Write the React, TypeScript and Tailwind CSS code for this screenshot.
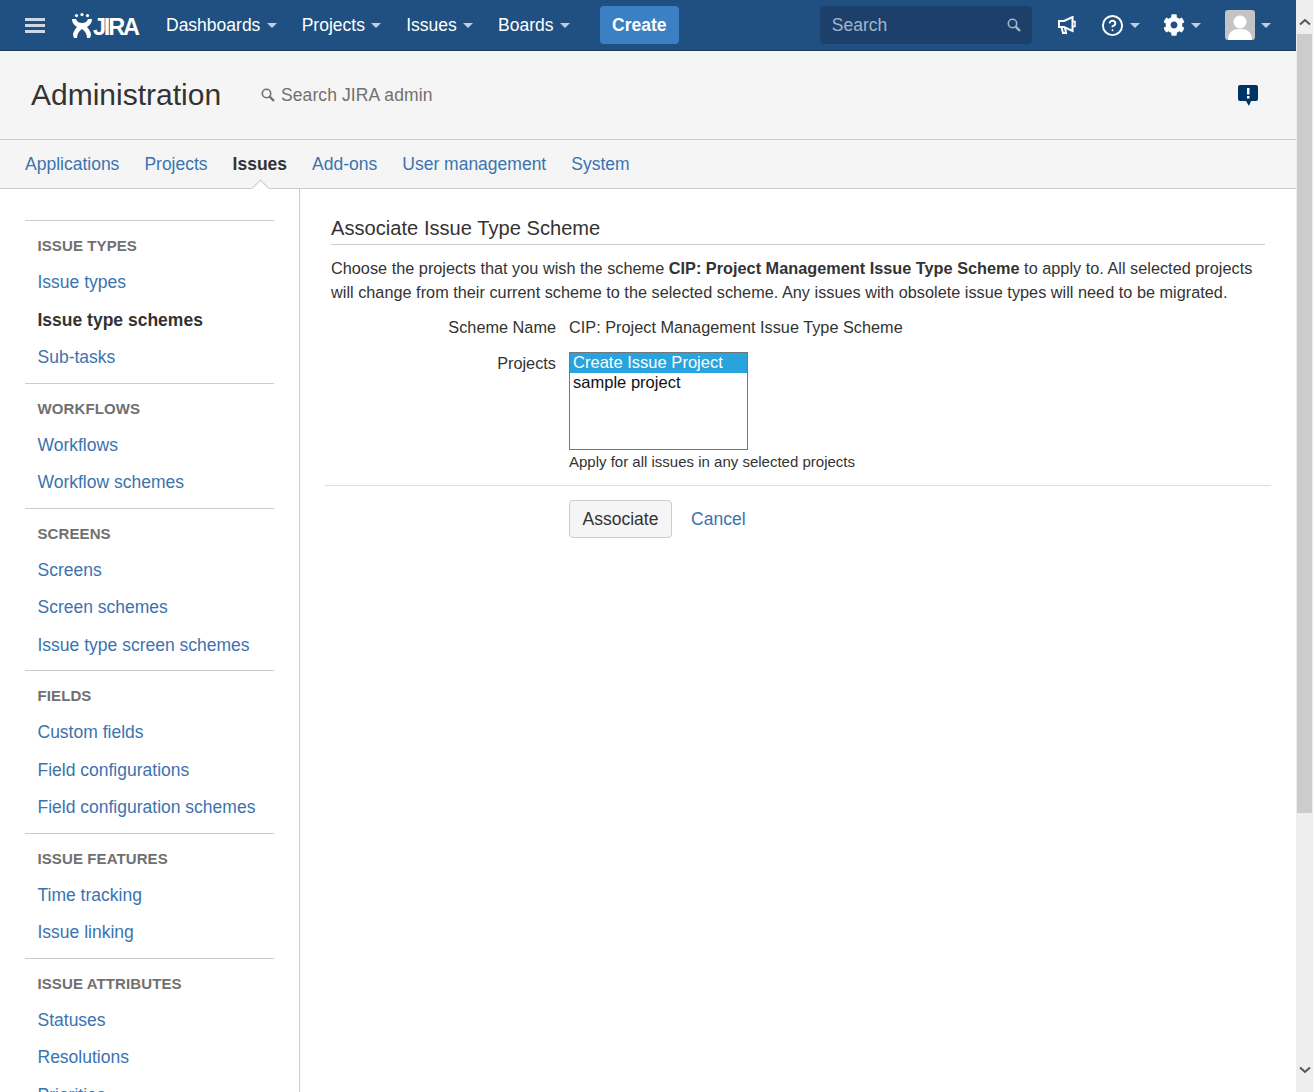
import { CircleHelp } from 'lucide-react';
import { FaCog } from 'react-icons/fa';

const sideGroups = [
  { title: 'ISSUE TYPES', links: ['Issue types', 'Issue type schemes', 'Sub-tasks'] },
  { title: 'WORKFLOWS', links: ['Workflows', 'Workflow schemes'] },
  { title: 'SCREENS', links: ['Screens', 'Screen schemes', 'Issue type screen schemes'] },
  { title: 'FIELDS', links: ['Custom fields', 'Field configurations', 'Field configuration schemes'] },
  { title: 'ISSUE FEATURES', links: ['Time tracking', 'Issue linking'] },
  { title: 'ISSUE ATTRIBUTES', links: ['Statuses', 'Resolutions', 'Priorities'] },
];

const tabs = ['Applications', 'Projects', 'Issues', 'Add-ons', 'User management', 'System'];

function Caret() {
  return <span className="inline-block h-0 w-0 border-x-[5px] border-t-[5px] border-x-transparent border-t-[#c0cede]" />;
}

function SearchIcon() {
  return (
    <svg width="14" height="14" viewBox="0 0 14 14" fill="none" stroke="currentColor">
      <circle cx="5.5" cy="5.5" r="4.2" strokeWidth="1.6" />
      <path d="M8.7 8.7 13 13" strokeWidth="2.4" />
    </svg>
  );
}

function TopLink({ label }: { label: string }) {
  return (
    <a className="flex items-center gap-[6.3px] text-[17.5px] text-white">
      {label}
      <Caret />
    </a>
  );
}

function Logo() {
  return (
    <div className="flex items-end text-white">
      <svg width="20" height="25" viewBox="0 0 20 25" fill="white">
        <circle cx="4.5" cy="2.6" r="1.6" />
        <circle cx="10" cy="1.6" r="1.6" />
        <circle cx="15.5" cy="2.6" r="1.6" />
        <path d="M0 6h4c1 3 3.5 4 6 4s5-1 6-4h4c0 4-2 6-5 8 2 2 4 5 4 8l-1 3h-3c0-4-2-7-5-9-3 2-5 5-5 9H2l-1-3c0-3 2-6 4-8C2 12 0 10 0 6z" />
      </svg>
      <span className="ml-[1px] text-[23.5px] font-bold leading-[21px] tracking-[-2.2px]">JIRA</span>
    </div>
  );
}

function Sidebar() {
  return (
    <aside className="w-[300px] shrink-0 border-r border-[#ccc] px-[25px] pt-[31px]">
      {sideGroups.map((g) => (
        <div key={g.title} className="border-t border-[#ccc] pb-[6.65px]">
          <h3 className="flex h-[42.45px] items-end px-[12.5px] pb-[10.45px] text-[15px] font-bold leading-none tracking-[0.1px] text-[#707070]">
            {g.title}
          </h3>
          {g.links.map((l) => (
            <a
              key={l}
              className={
                'flex h-[37.5px] items-center px-[12.5px] text-[17.5px] ' +
                (l === 'Issue type schemes' ? 'font-bold text-[#333]' : 'text-[#3b73af]')
              }
            >
              {l}
            </a>
          ))}
        </div>
      ))}
    </aside>
  );
}

function AssociateForm() {
  return (
    <section className="flex-1 px-[25px] pt-[26px] text-[16.25px] tracking-[0.018px] text-[#333]">
      <div className="mx-[6px]">
        <h2 className="border-b border-[#ccc] pb-[2px] text-[20.1px] leading-[27px]">Associate Issue Type Scheme</h2>
        <p className="mt-[11px] leading-[24px]">
          Choose the projects that you wish the scheme <b>CIP: Project Management Issue Type Scheme</b> to apply to. All
          selected projects will change from their current scheme to the selected scheme. Any issues with obsolete issue
          types will need to be migrated.
        </p>
      </div>
      <div className="mt-[11px] flex leading-[24px]">
        <label className="w-[231px] text-right">Scheme Name</label>
        <span className="ml-[13px]">CIP: Project Management Issue Type Scheme</span>
      </div>
      <div className="mt-[13px] flex">
        <label className="mt-[-1px] w-[231px] text-right leading-[24px]">Projects</label>
        <div className="ml-[13px]">
          <div className="h-[98px] w-[179px] border border-[#767676] bg-white text-[16.5px] leading-[20px] text-[#111]">
            <div className="flex h-[20px] items-center bg-[#28a3dd] pb-[2px] pl-[3px] text-white">Create Issue Project</div>
            <div className="flex h-[20px] items-center pb-[2px] pl-[3px]">sample project</div>
          </div>
          <p className="mt-[2px] text-[15px] leading-[20px] tracking-normal">Apply for all issues in any selected projects</p>
        </div>
      </div>
      <div className="mt-[13px] flex items-center border-t border-[#ddd] pt-[14px] pl-[244px]">
        <button className="h-[38px] w-[103px] rounded-[4px] border border-[#ccc] bg-[#f5f5f5] text-[17.5px] text-[#333]">
          Associate
        </button>
        <a className="ml-[19px] text-[17.5px] text-[#3b73af]">Cancel</a>
      </div>
    </section>
  );
}

export default function App() {
  return (
    <div className="flex h-[1092px] w-[1313px] overflow-hidden bg-white font-['Liberation_Sans',Arial,sans-serif]">
      <div className="w-[1296px] shrink-0">
        <header className="flex h-[51px] items-center border-b border-[#1c3a5c] bg-[#205081] pl-[25px] text-white">
          <div className="flex h-[15px] w-[20px] flex-col justify-between">
            <span className="h-[3px] bg-[#ccd8e5]" />
            <span className="h-[3px] bg-[#ccd8e5]" />
            <span className="h-[3px] bg-[#ccd8e5]" />
          </div>
          <div className="ml-[27px] w-[94px]">
            <Logo />
          </div>
          <nav className="flex items-center gap-[25px]">
            <TopLink label="Dashboards" />
            <TopLink label="Projects" />
            <TopLink label="Issues" />
            <TopLink label="Boards" />
          </nav>
          <button className="ml-[30px] h-[38px] w-[79px] rounded-[4px] bg-[#3b7fc4] text-[17.5px] font-bold text-white">
            Create
          </button>
          <div className="ml-[141px] flex h-[38px] w-[212px] items-center justify-between rounded-[4px] bg-[#1c4069] pl-[12px] pr-[11px] text-[17.5px] text-[#a3b5c9]">
            Search
            <SearchIcon />
          </div>
          <svg className="ml-[26px]" width="18" height="18" viewBox="0 0 18 18" fill="none" stroke="white" strokeWidth="2">
            <path d="M6 5 14.5 1v14L6 11H1V5z" />
            <path d="M14.5 5.5H17v5h-2.5" strokeWidth="1.5" />
            <path d="M3.5 11 5 17h3L7 11.5" />
          </svg>
          <div className="ml-[25px] flex items-center gap-[6px]">
            <CircleHelp size={23} strokeWidth={2} />
            <Caret />
          </div>
          <div className="ml-[23px] flex items-center gap-[6px]">
            <FaCog size={22} />
            <Caret />
          </div>
          <div className="ml-[24px] flex items-center gap-[6px]">
            <svg width="30" height="30" viewBox="0 0 30 30">
              <rect width="30" height="30" rx="3" fill="#c4c4c4" />
              <circle cx="15" cy="12" r="6.5" fill="white" />
              <path d="M3 30c0-8 5-11 12-11s12 3 12 11z" fill="white" />
            </svg>
            <Caret />
          </div>
        </header>

        <div className="flex h-[89px] items-center border-b border-[#ccc] bg-[#f5f5f5] pl-[31px] pr-[38px]">
          <h1 className="mt-[-2px] w-[190px] whitespace-nowrap text-[30px] text-[#333]">Administration</h1>
          <div className="ml-[40px] flex items-center gap-[6px] text-[17.5px] tracking-[0.1px] text-[#707070]">
            <SearchIcon />
            Search JIRA admin
          </div>
          <svg className="ml-auto" width="20" height="21" viewBox="0 0 20 21">
            <path d="M2 0h16a2 2 0 0 1 2 2v12a2 2 0 0 1-2 2h-5l-2 5-3-5H2a2 2 0 0 1-2-2V2a2 2 0 0 1 2-2z" fill="#003366" />
            <rect x="9" y="3" width="2.5" height="6.5" fill="white" />
            <rect x="9" y="11" width="2.5" height="2.5" fill="white" />
          </svg>
        </div>

        <div className="flex h-[49px] items-center gap-[25px] border-b border-[#ccc] bg-[#f5f5f5] px-[25px] text-[17.5px] text-[#3b73af]">
          {tabs.map((t) =>
            t === 'Issues' ? (
              <a key={t} className="relative font-bold text-[#333]">
                {t}
                <span className="absolute bottom-[-18px] left-[21px] h-[13px] w-[13px] rotate-45 border-l border-t border-[#ccc] bg-white" />
              </a>
            ) : (
              <a key={t}>{t}</a>
            ),
          )}
        </div>

        <div className="flex">
          <Sidebar />
          <AssociateForm />
        </div>
      </div>

      <div className="flex h-full w-[17px] shrink-0 flex-col items-center bg-[#eee]">
        <svg className="mt-[18px]" width="12" height="8" viewBox="0 0 12 8">
          <path d="M1 6.5 6 2l5 4.5" fill="none" stroke="#555" strokeWidth="2" />
        </svg>
        <div className="mt-[8px] h-[779px] w-[15px] bg-[#ccc]" />
        <svg className="mt-auto mb-[18px]" width="12" height="8" viewBox="0 0 12 8">
          <path d="M1 1.5 6 6l5-4.5" fill="none" stroke="#555" strokeWidth="2" />
        </svg>
      </div>
    </div>
  );
}
